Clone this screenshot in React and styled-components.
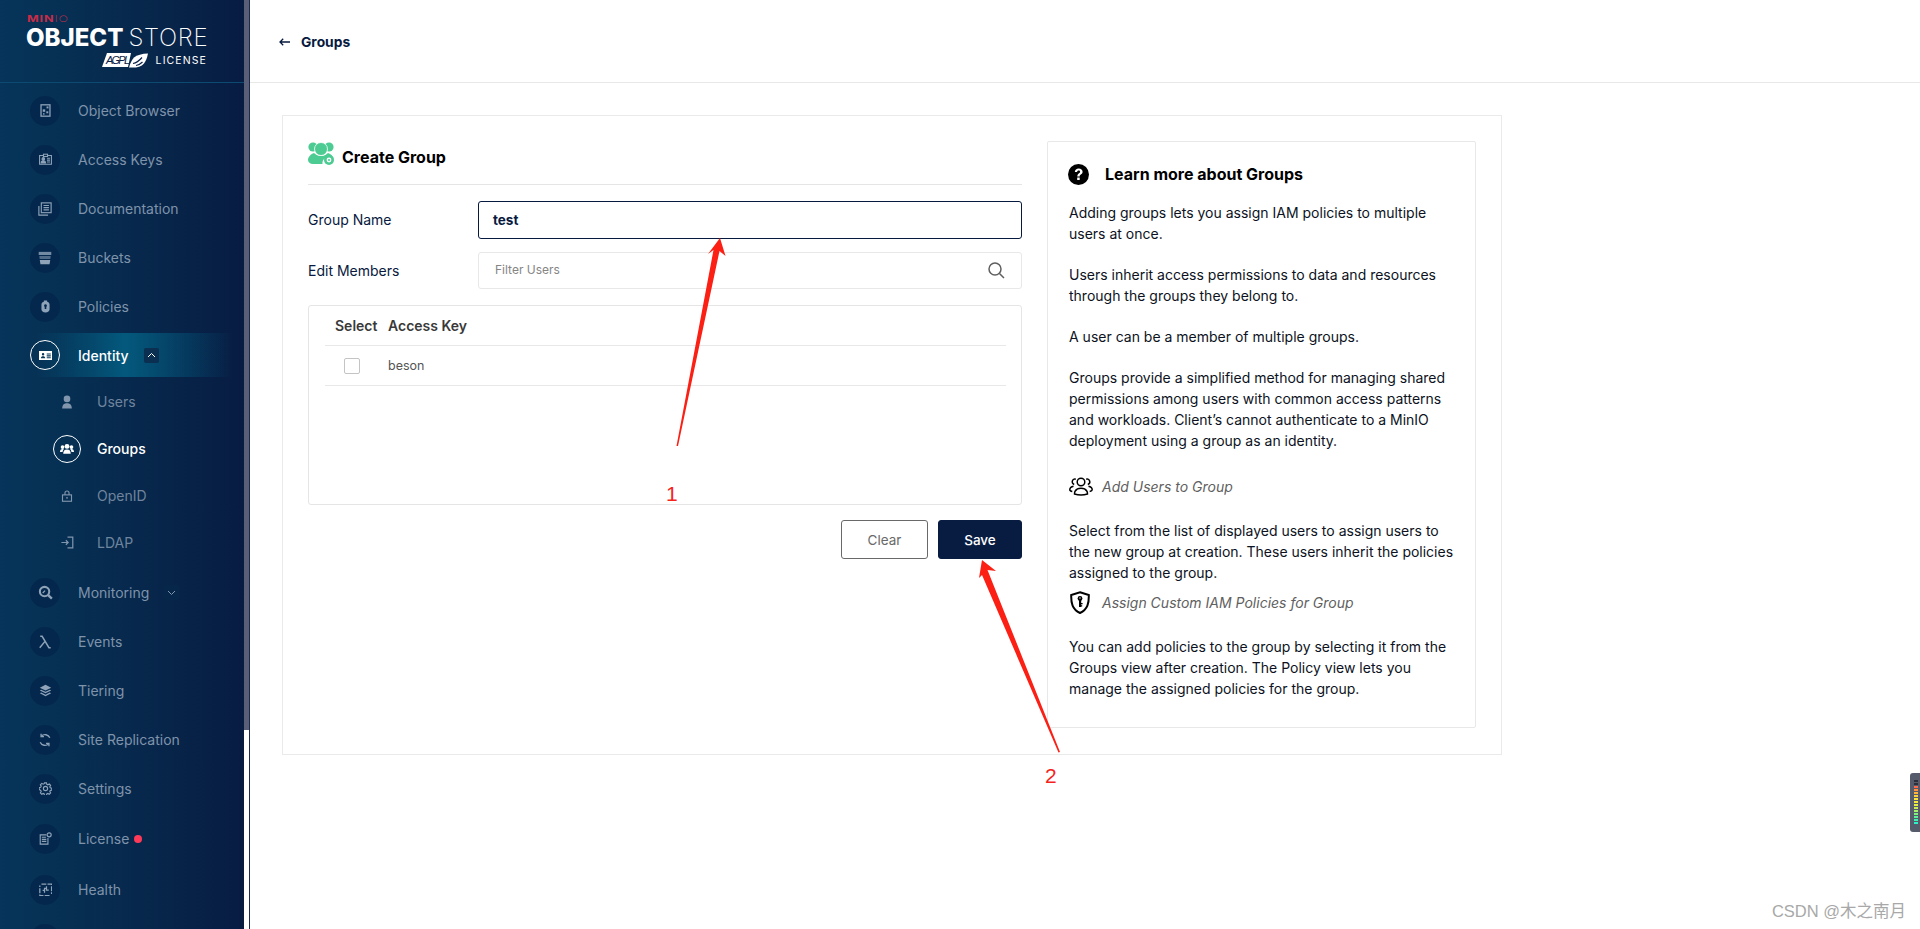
import React from "react";
import styled, { createGlobalStyle } from "styled-components";

const Global = createGlobalStyle`
  html, body { margin: 0; padding: 0; height: 100%; background: #fff; overflow: hidden; }
  body { font-family: Inter, "Noto Sans", sans-serif; color: #07193e; }
  * { box-sizing: border-box; }
  #root { height: 100%; }
`;

const Page = styled.div`
  position: relative;
  display: flex;
  width: 1920px;
  height: 929px;
  overflow: hidden;
`;

/* ---------- sidebar ---------- */
const Sidebar = styled.aside`
  flex: 0 0 244px;
  height: 929px;
  overflow: hidden;
  background: linear-gradient(90deg, #06345a 0%, #063154 22%, #081c42 100%);
`;
const Brand = styled.div`
  height: 83px;
  padding: 14px 38px 0 26px;
  border-bottom: 1px solid #0c4a72;
  display: flex;
  flex-direction: column;
  color: #fff;
`;
const MinioMark = styled.div`
  height: 9px;
  font-size: 9px;
  line-height: 9px;
  font-weight: 700;
  letter-spacing: 0.6px;
  color: #c72c48;
  margin-left: 1px;
  transform: scaleX(1.4);
  transform-origin: left center;
  span { font-weight: 200; }
`;
const ProductName = styled.div`
  margin-top: 3px;
  height: 24px;
  font-size: 24px;
  line-height: 24px;
  font-weight: 800;
  white-space: nowrap;
  span { font-weight: 200; letter-spacing: 0.7px; margin-left: 5px; }
`;
const LicenseRow = styled.div`
  margin-top: 3px;
  display: flex;
  justify-content: flex-end;
  align-items: center;
  gap: 8px;
`;
const LicenseText = styled.span`
  font-size: 10.5px;
  font-weight: 400;
  letter-spacing: 1.1px;
  margin-right: -1px;
`;
const Nav = styled.nav`
  padding-top: 3px;
  display: flex;
  flex-direction: column;
`;
const NavRow = styled.div`
  height: ${(p) => p.$h || 49}px;
  margin-top: ${(p) => p.$mt || 0}px;
  padding-left: 30px;
  display: flex;
  align-items: center;
  flex: none;
  font-size: 14px;
  font-weight: ${(p) => (p.$active ? 500 : 400)};
  color: ${(p) => (p.$active ? "#fff" : "#7f93ab")};
  background: ${(p) =>
    p.$active
      ? "linear-gradient(90deg, rgba(3,89,125,0) 36px, #03597d 125px, rgba(3,89,125,0) 233px)"
      : "none"};
`;
const IconDisc = styled.span`
  width: 30px;
  height: 30px;
  flex: none;
  border-radius: 50%;
  display: flex;
  align-items: center;
  justify-content: center;
  margin-right: 18px;
  background: ${(p) => (p.$active ? "transparent" : "#04284d")};
  border: ${(p) => (p.$active ? "1px solid #fff" : "none")};
  color: ${(p) => (p.$active ? "#fff" : "#8ea2b8")};
`;
const Caret = styled.span`
  width: 15px;
  height: 15px;
  margin-left: ${(p) => p.$ml}px;
  border-radius: 2px;
  display: flex;
  align-items: center;
  justify-content: center;
  background: ${(p) => (p.$open ? "#0a2f50" : "#07274a")};
  color: ${(p) => (p.$open ? "#fff" : "#8195ad")};
`;
const SubList = styled.div`
  display: flex;
  flex-direction: column;
  margin: 1px 0 2px;
`;
const SubRow = styled.div`
  height: 47px;
  padding-left: 53px;
  display: flex;
  align-items: center;
  font-size: 14px;
  font-weight: ${(p) => (p.$active ? 500 : 400)};
  color: ${(p) => (p.$active ? "#fff" : "#6f849d")};
`;
const SubIcon = styled.span`
  width: 28px;
  height: 28px;
  flex: none;
  border-radius: 50%;
  margin-right: 16px;
  display: flex;
  align-items: center;
  justify-content: center;
  color: ${(p) => (p.$active ? "#fff" : "#8195ad")};
  border: ${(p) => (p.$active ? "1px solid #fff" : "none")};
`;
const Dot = styled.span`
  width: 8px;
  height: 8px;
  border-radius: 50%;
  background: #ff3958;
  margin-left: 5px;
  margin-top: 1px;
`;
const ScrollTrack = styled.div`
  flex: 0 0 6px;
  height: 929px;
  background: #fff;
  border-right: 1px solid #1a2a50;
`;
const ScrollThumb = styled.div`
  height: 730px;
  background: #5a5f77;
`;

/* ---------- main ---------- */
const Main = styled.main`
  flex: 1;
  display: flex;
  flex-direction: column;
  min-width: 0;
`;
const TopBar = styled.header`
  height: 83px;
  flex: none;
  padding: 2px 0 0 29px;
  border-bottom: 1px solid #e8e8e8;
  display: flex;
  align-items: center;
  gap: 11px;
  font-size: 13.8px;
  font-weight: 700;
  color: #07193e;
`;
const Content = styled.div`
  padding: 32px;
`;
const Card = styled.section`
  width: 1220px;
  height: 640px;
  border: 1px solid #eaeaea;
  padding: 25px;
  display: flex;
  gap: 25px;
  align-items: flex-start;
`;
const FormColumn = styled.div`
  flex: 0 0 714px;
  display: flex;
  flex-direction: column;
`;
const FormTitle = styled.div`
  height: 44px;
  border-bottom: 1px solid #e5e5e5;
  display: flex;
  align-items: flex-start;
  gap: 8px;
  font-size: 16px;
  font-weight: 700;
  color: #000;
  line-height: 30px;
  padding-top: 1px;
`;
const FieldRow = styled.div`
  display: flex;
  align-items: center;
  margin-top: ${(p) => p.$mt}px;
`;
const FieldLabel = styled.label`
  flex: 0 0 170px;
  font-size: 14px;
  color: #07193e;
  padding-bottom: ${(p) => p.$pb || 0}px;
`;
const NameInput = styled.div`
  flex: 1;
  height: 38px;
  border: 1px solid #07193e;
  border-radius: 3px;
  padding-left: 14px;
  display: flex;
  align-items: center;
  font-size: 13.5px;
  font-weight: 700;
  color: #07193e;
`;
const FilterInput = styled.div`
  flex: 1;
  height: 37px;
  border: 1px solid #e8e8e8;
  border-radius: 3px;
  padding: 0 16px 2px;
  display: flex;
  align-items: center;
  justify-content: space-between;
  font-size: 12px;
  color: #858585;
`;
const MembersBox = styled.div`
  margin-top: 16px;
  height: 200px;
  border: 1px solid #e5e5e5;
  border-radius: 3px;
  padding: 0 15px 0 16px;
`;
const HeaderRow = styled.div`
  height: 40px;
  border-bottom: 1px solid #e8e8e8;
  display: flex;
  align-items: center;
  padding-left: 10px;
  font-size: 14px;
  font-weight: 600;
  color: #393939;
`;
const SelectHead = styled.span`
  width: 53px;
`;
const UserRow = styled.div`
  height: 40px;
  border-bottom: 1px solid #e8e8e8;
  display: flex;
  align-items: center;
  padding-left: 19px;
  font-size: 12.5px;
  color: #555;
`;
const CheckBox = styled.span`
  width: 16px;
  height: 16px;
  border: 1px solid #c4c4c4;
  border-radius: 2px;
  margin-right: 28px;
`;
const Actions = styled.div`
  margin-top: 15px;
  display: flex;
  justify-content: flex-end;
  gap: 10px;
`;
const Button = styled.button`
  height: 39px;
  width: ${(p) => p.$w}px;
  border-radius: 3px;
  font: ${(p) => (p.$primary ? 500 : 400)} 13.5px Inter, sans-serif;
  border: 1px solid ${(p) => (p.$primary ? "#081c42" : "#696969")};
  background: ${(p) => (p.$primary ? "#081c42" : "#fff")};
  color: ${(p) => (p.$primary ? "#fff" : "#696969")};
  padding: 0;
`;

/* ---------- help ---------- */
const HelpBox = styled.aside`
  flex: 0 0 429px;
  height: 587px;
  border: 1px solid #e8e8e8;
  border-radius: 2px;
  padding: 21px 21px 0 21px;
  font-size: 14px;
  line-height: 21px;
  color: #07193e;
`;
const HelpTitle = styled.div`
  display: flex;
  align-items: center;
  gap: 16px;
  height: 23px;
  margin: 0 0 16px -1px;
  font-size: 16px;
  font-weight: 700;
  color: #000;
`;
const HelpParagraph = styled.p`
  margin: 0 0 ${(p) => (p.$flush ? 0 : 20)}px;
  white-space: nowrap;
  color: #0c1222;
`;
const SubHeading = styled.div`
  display: flex;
  align-items: center;
  gap: 9px;
  height: 24px;
  margin: ${(p) => p.$m};
  font-style: italic;
  font-size: 14px;
  color: #606060;
`;

/* ---------- overlay: annotations pasted on the screenshot ---------- */
const Annotations = styled.svg`
  position: absolute;
  left: 0;
  top: 0;
  pointer-events: none;
`;
const Step = styled.span`
  position: absolute;
  left: ${(p) => p.$x}px;
  top: ${(p) => p.$y}px;
  font: 400 21px "Liberation Sans", sans-serif;
  line-height: 24px;
  color: #f5231c;
`;
const Watermark = styled.span`
  position: absolute;
  right: 14px;
  top: 901px;
  font: 400 16.5px/20px "Liberation Sans", "Noto Sans CJK SC", sans-serif;
  color: #a8a8a8;
  white-space: nowrap;
`;
const Meter = styled.div`
  position: absolute;
  left: 1910px;
  top: 773px;
  width: 12px;
  height: 59px;
  border-radius: 3px 0 0 3px;
  background: #565b6c;
  padding: 7px 0 0 4px;
  display: flex;
  flex-direction: column;
  gap: 1px;
`;
const MeterBar = styled.i`
  display: block;
  width: 4px;
  height: 2px;
  background: ${(p) => p.$c};
`;

/* ---------- icons ---------- */
const Svg = ({ s = 14, children, fill = "none", vb = "0 0 16 16", ...r }) => (
  <svg width={s} height={s} viewBox={vb} fill={fill} stroke={fill === "none" ? "currentColor" : "none"} strokeWidth="1.2" {...r}>
    {children}
  </svg>
);
const icons = {
  object: (
    <Svg s={13}>
      <rect x="2.500" y="1" width="11" height="14" strokeWidth="1.600" />
      <rect x="9.300" y="3" width="2.400" height="2.400" fill="currentColor" stroke="none" />
      <rect x="4.600" y="6.600" width="3" height="3" fill="currentColor" stroke="none" />
      <rect x="9" y="9" width="2.400" height="2.400" fill="currentColor" stroke="none" />
      <rect x="5" y="11.300" width="1.800" height="1.800" fill="currentColor" stroke="none" />
    </Svg>
  ),
  keys: (
    <Svg s={13} strokeWidth="1.300">
      <path d="M5.500 3H.7v10.800h14.600V3h-4.800" />
      <rect x="5.500" y="1.500" width="5" height="2.800" />
      <circle cx="5.300" cy="7.300" r="1.600" fill="currentColor" />
      <path d="M2.600 12.300c0-2 1.300-2.800 2.700-2.800S8 10.300 8 12.300z" fill="currentColor" />
      <path d="M9.800 6.500h3.700M9.800 8.800h3.700M9.800 11h3.700" />
    </Svg>
  ),
  docs: (
    <Svg s={14} strokeWidth="1.300">
      <path d="M1 4.500V15h10.500" />
      <rect x="3.800" y="1" width="11.200" height="11.200" />
      <path d="M6.300 4h6.200M6.300 6.500h6.200M6.300 9h6.200" />
    </Svg>
  ),
  buckets: (
    <Svg s={14} fill="currentColor">
      <path d="M.8 1h14.400v3.600H.8z" opacity=".8" />
      <path d="M1.500 5.800h13l-.4 3.300H1.900z" opacity=".55" />
      <path d="M2 10.300h12l-.8 4.700H2.800z" />
    </Svg>
  ),
  policies: (
    <Svg s={13} fill="currentColor">
      <path fillRule="evenodd" d="M6 .5h4v1.800c1.700.4 3 1.600 3 3.200v6c0 2.200-2 4-5 4s-5-1.800-5-4v-6c0-1.600 1.300-2.800 3-3.200zM8 5.300a1.700 1.700 0 0 0-1 3.100V11h2V8.400a1.700 1.700 0 0 0-1-3.100z" />
    </Svg>
  ),
  identity: (
    <Svg s={13} fill="currentColor">
      <path fillRule="evenodd" d="M0 2.500h16v11H0zM5 5a1.500 1.500 0 1 0 0 3 1.500 1.500 0 0 0 0-3zM2.300 11.500h5.400C7.700 9.800 6.500 9 5 9s-2.700.8-2.700 2.500zM9.500 5.500v1.300h5V5.500zm0 2.300v1.300h5V7.800zm0 2.300v1.300h5v-1.300z" />
    </Svg>
  ),
  users: (
    <Svg s={14} fill="currentColor">
      <circle cx="8" cy="4.500" r="3.800" />
      <path d="M2.500 15.500c0-3.500 1.500-6 5.500-6s5.500 2.500 5.500 6z" />
    </Svg>
  ),
  groups: (
    <Svg s={14} fill="currentColor">
      <circle cx="8" cy="5" r="2.800" />
      <circle cx="2.900" cy="5.800" r="2.100" />
      <circle cx="13.100" cy="5.800" r="2.100" />
      <path d="M3.700 13.500c0-3 1.400-4.800 4.300-4.800s4.300 1.800 4.300 4.800z" />
      <path d="M0 11.500c0-2.200 1-3.600 3-3.600.6 0 1 .1 1.300.3-.8.800-1.300 2-1.400 3.300zM16 11.500c0-2.200-1-3.600-3-3.600-.6 0-1 .1-1.300.3.800.8 1.300 2 1.400 3.300z" />
    </Svg>
  ),
  openid: (
    <Svg s={12} strokeWidth="1.500">
      <rect x="2" y="6.500" width="12" height="8.500" strokeWidth="1.500" />
      <path d="M5.300 6.500V4a2.700 2.700 0 0 1 5.400 0v2.500" strokeWidth="1.500" />
      <rect x="7" y="9.500" width="2" height="2" fill="currentColor" stroke="none" />
    </Svg>
  ),
  ldap: (
    <Svg s={13}>
      <path d="M8 1.500h6.500v13H8" strokeWidth="1.500" />
      <path d="M.5 8h8M6 5.200 8.800 8 6 10.800" strokeWidth="1.500" />
    </Svg>
  ),
  monitoring: (
    <Svg s={15} strokeWidth="2">
      <circle cx="7" cy="7" r="5" strokeWidth="2.200" />
      <path d="m10.800 10.800 4 3.700" strokeWidth="2.600" />
      <path d="M5 8.500 7.500 6" strokeWidth="1.400" />
    </Svg>
  ),
  events: (
    <Svg s={14} strokeWidth="1.700">
      <path d="M2.500 1.500h2.200L12.500 14.500h2M8 7.300 2 14.500" strokeWidth="1.700" />
    </Svg>
  ),
  tiering: (
    <Svg s={13} fill="currentColor">
      <path d="M8 1 15 4.500 8 8 1 4.500z" />
      <path d="m2.700 7 5.300 2.600L13.300 7 15 8l-7 3.500L1 8z" />
      <path d="m2.700 10.500 5.300 2.600 5.300-2.600 1.700 1-7 3.500-7-3.500z" />
    </Svg>
  ),
  replication: (
    <Svg s={14} strokeWidth="1.500">
      <path d="M13.500 5.500A6 6 0 0 0 3.800 3.600M2.500 10.500a6 6 0 0 0 9.700 1.900" strokeWidth="1.500" />
      <path d="M3.500.8v3.300h3.300M12.500 15.200v-3.300H9.200" strokeWidth="1.500" />
    </Svg>
  ),
  settings: (
    <Svg s={13} strokeWidth="1.400">
      <circle cx="8" cy="8" r="2.600" strokeWidth="1.400" />
      <path d="M6.800 1h2.400l.4 1.900 1.300.6 1.700-1 1.700 1.700-1 1.700.6 1.300 1.900.4v2.400l-1.900.4-.6 1.300 1 1.700-1.700 1.700-1.700-1-1.300.6-.4 1.900H6.800l-.4-1.900-1.300-.6-1.700 1-1.700-1.700 1-1.700-.6-1.300L.2 9.200V6.800l1.900-.4.6-1.300-1-1.700 1.700-1.700 1.700 1 1.300-.6z" strokeWidth="1.400" />
    </Svg>
  ),
  license: (
    <Svg s={13} strokeWidth="1.300">
      <path d="M9 3.500H1.500V15h9.500V7.500" strokeWidth="1.400" />
      <path d="M3.500 6.500h5M3.500 9h5.500M3.500 11.500h5.500" strokeWidth="1.400" />
      <circle cx="12.500" cy="3.500" r="2.500" strokeWidth="1.400" />
    </Svg>
  ),
  health: (
    <Svg s={13} strokeWidth="1.500">
      <path d="M3 1.500h12.500v12M13 15.500H1V3" strokeWidth="1.600" strokeDasharray="6 1.500" />
      <path d="M4.500 9h2.300V6.500h2.400v2.400H12M6.800 9v3M9.200 4v2.500" strokeWidth="1.500" />
    </Svg>
  ),
};

const Chevron = ({ up }) => (
  <svg width="9" height="6" viewBox="0 0 9 6" fill="none" stroke="currentColor" strokeWidth="1">
    <path d={up ? "M1 5l3.500-3.500L8 5" : "M1 1l3.500 3.500L8 1"} />
  </svg>
);

const AgplLogo = () => (
  <svg width="46" height="15" viewBox="0 0 46 15">
    <path d="M5 0h24l-3 14H0z" fill="#fff" />
    <text x="4" y="10.500" fontFamily="Liberation Sans, sans-serif" fontSize="11" fontStyle="italic" fontWeight="400" fill="#0a2147" textLength="24">AGPL</text>
    <path d="M27 14.500c7 .5 12-.5 15-4 1.500-2 3-5 4-10-6 .2-11 1.500-14 4-2 2-3.500 5-5 10z" fill="#fff" />
    <path d="M31 10.500c3-.5 6-2.500 9-6M34 12.500c2.500-.4 4.500-1.500 6.500-3.500" stroke="#0a2147" strokeWidth="1.200" fill="none" />
  </svg>
);

const GroupIcon = () => (
  <svg width="26" height="23" viewBox="0 0 26 23" style={{ flex: "none" }}>
    <g fill="#4ccb92">
      <circle cx="5" cy="5" r="4.600" />
      <circle cx="21" cy="5" r="4.600" />
      <path d="M0 18c0-3 3-6 6-7 2 2 4 3 7 3 3 0 5-1 7-3 3 1 5 3 6 6-1-1-3-2-5-2-4 0-7 3-6.500 7H5c-3 0-5-2-5-4z" />
      <circle cx="21" cy="18" r="5" />
    </g>
    <circle cx="13" cy="7" r="6.500" fill="#4ccb92" stroke="#fff" strokeWidth=".8" />
    <circle cx="21" cy="18" r="2.400" fill="#fff" />
    <circle cx="21" cy="18" r="1" fill="#4ccb92" />
  </svg>
);

const HelpIcon = () => (
  <svg width="21" height="21" viewBox="0 0 21 21" style={{ flex: "none" }}>
    <circle cx="10.500" cy="10.500" r="10.500" fill="#000" />
    <path d="M6.800 8c.2-2.300 1.700-3.500 3.900-3.500 2.300 0 3.900 1.300 3.900 3.200 0 1.400-.8 2.200-1.800 2.900-.8.600-1.100 1-1.100 1.900H9.300c0-1.500.5-2.300 1.500-3 .8-.6 1.300-1 1.300-1.700 0-.8-.6-1.300-1.500-1.300S9.200 7 9.100 8z" fill="#fff" />
    <rect x="9.200" y="13.500" width="2.500" height="2.500" fill="#fff" />
  </svg>
);

const PeopleIcon = () => (
  <svg width="24" height="19" viewBox="0 0 24 19" fill="none" stroke="#000" strokeWidth="1.500" style={{ flex: "none" }}>
    <circle cx="12" cy="5" r="3.800" />
    <path d="M6.800 2.200A2.600 2.600 0 1 0 5.200 7.500M17.200 2.200A2.600 2.600 0 1 1 18.800 7.500" />
    <path d="M5.500 17c0-1 0-2 .7-3 1-1.700 3-2.800 5.800-2.800s4.800 1.100 5.800 2.800c.7 1 .7 2 .7 3-4 1.300-9 1.300-13 0z" />
    <path d="M4.500 9.200C2.300 9.600.8 11 .8 12.800c0 1 1 1.500 2.500 1.800M19.500 9.200c2.200.4 3.700 1.800 3.700 3.600 0 1-1 1.500-2.500 1.800" />
  </svg>
);

const ShieldIcon = () => (
  <svg width="20" height="23" viewBox="0 0 20 23" style={{ flex: "none", marginLeft: 1, marginRight: 3 }}>
    <path d="M10 1.200 18.800 4c.2 8-1 14.500-8.800 18C2.200 18.500 1 12 1.200 4z" fill="none" stroke="#000" strokeWidth="2" />
    <circle cx="10" cy="7.500" r="2.400" fill="#000" />
    <path d="M9 9h2.200v7H9z" fill="#000" />
    <path d="M11 12h1.600v1.300H11zM11 14.200h1.200v1.300H11z" fill="#000" />
    <circle cx="10" cy="7" r=".7" fill="#fff" />
  </svg>
);

const navTop = [
  ["Object Browser", "object"],
  ["Access Keys", "keys"],
  ["Documentation", "docs"],
  ["Buckets", "buckets"],
  ["Policies", "policies"],
];
const subs = [
  ["Users", "users"],
  ["Groups", "groups", true],
  ["OpenID", "openid"],
  ["LDAP", "ldap"],
];
const navBottom = [
  ["Events", "events"],
  ["Tiering", "tiering"],
  ["Site Replication", "replication"],
  ["Settings", "settings"],
];
const meterColors = ["#2a2f3a", "#2a2f3a", "#ff6a4a", "#ff9040", "#ffb43a", "#ffd23a", "#fde43a", "#f5ea3a", "#e5ee45", "#c9ee55", "#a5ef6a", "#7ff080", "#5cf098", "#40f0b0", "#30f0c5"];

export default function App() {
  return (
    <Page>
      <Global />
      <Sidebar>
        <Brand>
          <MinioMark>MIN<span>IO</span></MinioMark>
          <ProductName>OBJECT<span>STORE</span></ProductName>
          <LicenseRow>
            <AgplLogo />
            <LicenseText>LICENSE</LicenseText>
          </LicenseRow>
        </Brand>
        <Nav>
          {navTop.map(([label, ic]) => (
            <NavRow key={label}>
              <IconDisc>{icons[ic]}</IconDisc>
              {label}
            </NavRow>
          ))}
          <NavRow $active $h={44} $mt={2}>
            <IconDisc $active>{icons.identity}</IconDisc>
            Identity
            <Caret $open $ml={15}><Chevron up /></Caret>
          </NavRow>
          <SubList>
            {subs.map(([label, ic, active]) => (
              <SubRow key={label} $active={active}>
                <SubIcon $active={active}>{icons[ic]}</SubIcon>
                {label}
              </SubRow>
            ))}
          </SubList>
          <NavRow>
            <IconDisc>{icons.monitoring}</IconDisc>
            Monitoring
            <Caret $ml={15}><Chevron /></Caret>
          </NavRow>
          {navBottom.map(([label, ic]) => (
            <NavRow key={label}>
              <IconDisc>{icons[ic]}</IconDisc>
              {label}
            </NavRow>
          ))}
          <NavRow $mt={1}>
            <IconDisc>{icons.license}</IconDisc>
            License
            <Dot />
          </NavRow>
          <NavRow $mt={2}>
            <IconDisc>{icons.health}</IconDisc>
            Health
          </NavRow>
          <NavRow><IconDisc /></NavRow>
        </Nav>
      </Sidebar>
      <ScrollTrack><ScrollThumb /></ScrollTrack>

      <Main>
        <TopBar>
          <svg width="11" height="8" viewBox="0 0 11 8" fill="none" stroke="#07193e" strokeWidth="1.300">
            <path d="M11 4H1M4.200.8 1 4l3.200 3.200" />
          </svg>
          Groups
        </TopBar>
        <Content>
          <Card>
            <FormColumn>
              <FormTitle>
                <GroupIcon />
                Create Group
              </FormTitle>
              <FieldRow $mt={16}>
                <FieldLabel $pb={2}>Group Name</FieldLabel>
                <NameInput>test</NameInput>
              </FieldRow>
              <FieldRow $mt={13}>
                <FieldLabel>Edit Members</FieldLabel>
                <FilterInput>
                  Filter Users
                  <svg width="18" height="18" viewBox="0 0 18 18" fill="none" stroke="#5f5f5f" strokeWidth="1.500">
                    <circle cx="8" cy="8" r="6" />
                    <path d="m12.500 12.500 4.500 4.500" />
                  </svg>
                </FilterInput>
              </FieldRow>
              <MembersBox>
                <HeaderRow>
                  <SelectHead>Select</SelectHead>
                  Access Key
                </HeaderRow>
                <UserRow>
                  <CheckBox />
                  beson
                </UserRow>
              </MembersBox>
              <Actions>
                <Button $w={87}>Clear</Button>
                <Button $w={84} $primary>Save</Button>
              </Actions>
            </FormColumn>
            <HelpBox>
              <HelpTitle>
                <HelpIcon />
                Learn more about Groups
              </HelpTitle>
              <HelpParagraph>
                Adding groups lets you assign IAM policies to multiple<br />users at once.
              </HelpParagraph>
              <HelpParagraph>
                Users inherit access permissions to data and resources<br />through the groups they belong to.
              </HelpParagraph>
              <HelpParagraph>A user can be a member of multiple groups.</HelpParagraph>
              <HelpParagraph>
                Groups provide a simplified method for managing shared<br />
                permissions among users with common access patterns<br />
                and workloads. Client’s cannot authenticate to a MinIO<br />
                deployment using a group as an identity.
              </HelpParagraph>
              <SubHeading $m="23px 0 22px">
                <PeopleIcon />
                Add Users to Group
              </SubHeading>
              <HelpParagraph $flush>
                Select from the list of displayed users to assign users to<br />
                the new group at creation. These users inherit the policies<br />
                assigned to the group.
              </HelpParagraph>
              <SubHeading $m="7px 0 22px">
                <ShieldIcon />
                Assign Custom IAM Policies for Group
              </SubHeading>
              <HelpParagraph>
                You can add policies to the group by selecting it from the<br />
                Groups view after creation. The Policy view lets you<br />
                manage the assigned policies for the group.
              </HelpParagraph>
            </HelpBox>
          </Card>
        </Content>
      </Main>

      <Annotations width="1920" height="929" viewBox="0 0 1920 929">
        <path d="M720 238 L725.500 256 L719.500 251 L678 446 L676.500 446 L713.500 250 L708 254 Z" fill="#fb1f14" />
        <path d="M982 560 L996 571 L987.500 570 L1060 752 L1058.500 752.500 L982 575 L979 578 Z" fill="#fb1f14" />
      </Annotations>
      <Step $x={666} $y={482}>1</Step>
      <Step $x={1045} $y={764}>2</Step>
      <Meter>
        {meterColors.map((c, i) => <MeterBar key={i} $c={c} />)}
      </Meter>
      <Watermark>CSDN @木之南月</Watermark>
    </Page>
  );
}
